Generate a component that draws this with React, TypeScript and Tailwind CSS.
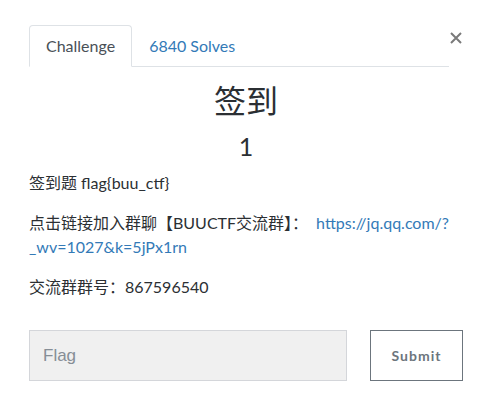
import React from "react";

export default function App() {
  return (
    <div
      className="relative w-[483px] h-[411px] bg-white text-[#2b2f33] overflow-hidden"
      style={{ fontFamily: 'Lato, "Noto Sans CJK SC", sans-serif' }}
    >
      <button className="absolute left-[449px] top-[31px] w-[13px] h-[13px] flex items-center justify-center">
        <svg width="12" height="12" viewBox="0 0 12 12">
          <path d="M1 1 L11 11 M11 1 L1 11" stroke="#7a7a7a" strokeWidth="2" />
        </svg>
      </button>

      <div className="pt-[25px] pl-[29px] pr-[20px]">
        <div className="flex w-[420px] border-b border-[#dee2e6]">
          <div className="-mb-px h-[42px] px-4 flex items-center border border-[#dee2e6] border-b-white rounded-t-[4px] bg-white text-[16px] text-[#495057]">
            Challenge
          </div>
          <div className="h-[41px] pl-[17px] pr-4 flex items-center text-[16px] text-[#337ab7]">
            6840 Solves
          </div>
        </div>

        <div className="w-[434px] flex flex-col items-center">
          <h1 className="mt-[14px] text-[32px] leading-[40px] font-normal">签到</h1>
          <h3 className="mt-[9px] text-[25px] leading-[32px] font-normal">1</h3>
        </div>

        <div className="mt-[9px] text-[16px] leading-[24px]">
          <p className="mb-4">签到题 flag{"{buu_ctf}"}</p>
          <p className="mb-4 w-[430px]">
            点击链接加入群聊【BUUCTF交流群】：
            <a className="ml-[8px] text-[#337ab7]">https://jq.qq.com/?_wv=1027&amp;k=5jPx1rn</a>
          </p>
          <p>交流群群号：867596540</p>
        </div>

        <div className="mt-[31px] flex w-[434px] justify-between">
          <div
            className="w-[318px] h-[51px] bg-[#f0f0f0] border border-[#d4d6da] flex items-center pl-[13px] text-[17px] text-[#868e96]"
            style={{ fontFamily: '"Liberation Sans", Arial, sans-serif' }}
          >
            Flag
          </div>
          <button className="w-[93px] h-[51px] border border-[#6c757d] text-[14px] font-bold tracking-[1px] text-[#6c757d] flex items-center justify-center">
            Submit
          </button>
        </div>
      </div>
    </div>
  );
}
